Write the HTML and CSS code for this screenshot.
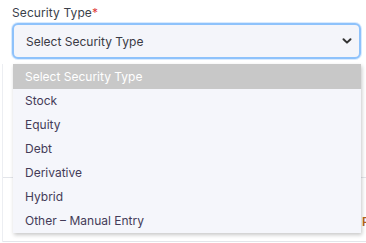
FILE: index.html
```html
<!DOCTYPE html>
<html lang="en">
<head>
    <meta charset="UTF-8">
    <meta name="viewport" content="width=device-width, initial-scale=1.0">
    <title>Security Type</title>
    <link rel="stylesheet" href="styles.css">
</head>
<body>
    <div class="form-group">
        <label class="form-label">Security Type<span class="required">*</span></label>
        <div class="select-wrap">
            <div class="select-box">
                <span>Select Security Type</span>
                <svg class="chevron" width="12" height="12" viewBox="0 0 12 12">
                    <path d="M2.5 4.2 L6 7.6 L9.5 4.2" fill="none" stroke="#333" stroke-width="2" stroke-linecap="round" stroke-linejoin="round"/>
                </svg>
            </div>
            <ul class="options">
                <li class="option selected">Select Security Type</li>
                <li class="option">Stock</li>
                <li class="option">Equity</li>
                <li class="option">Debt</li>
                <li class="option">Derivative</li>
                <li class="option">Hybrid</li>
                <li class="option">Other – Manual Entry</li>
            </ul>
        </div>
        <div class="behind">
            <div class="behind-row"></div>
            <div class="behind-row last"><span class="behind-btn">Pr</span></div>
        </div>
    </div>
</body>
</html>
```

FILE: styles.css
```css
:root {
    --text-color: #443b58;
    --field-bg: #f4f5fa;
    --focus-color: #8ec2fb;
}
body {
    font-family: 'Inter', sans-serif;
    background-color: #ffffff;
    margin: 0;
    padding: 0;
    overflow: hidden;
}
.form-group {
    padding: 5px 5px 0 12px;
}
.form-label {
    display: block;
    font-size: 12px;
    letter-spacing: 0.1px;
    color: #3a3f4a;
    margin-bottom: 3px;
}
.required {
    color: #e03b3b;
}
.select-wrap {
    position: relative;
}
.select-box {
    display: flex;
    align-items: center;
    justify-content: space-between;
    height: 32px;
    background-color: var(--field-bg);
    border: 2px solid var(--focus-color);
    border-radius: 6px;
    box-shadow: 0 0 0 1px rgba(142, 194, 251, 0.35);
    padding: 0 6px 0 12px;
    font-size: 12px;
    color: #3a3a44;
}
.chevron {
    display: block;
}
.options {
    position: absolute;
    top: 41px;
    left: 1px;
    right: 0;
    margin: 0;
    padding: 0;
    list-style: none;
    background-color: #f5f6fb;
    box-shadow: 1px 2px 4px rgba(0, 0, 0, 0.22);
    z-index: 2;
}
.option {
    height: 24px;
    line-height: 24px;
    padding-left: 12px;
    font-size: 12px;
    color: var(--text-color);
}
.option.selected {
    height: 25px;
    line-height: 25px;
    background-color: #c8c8c8;
    color: #ffffff;
}
.behind {
    margin-left: -10px;
    margin-right: -20px;
    margin-top: 5px;
    border-left: 1px solid #eceef2;
    height: 178px;
    position: relative;
}
.behind-row {
    height: 113px;
    border-bottom: 1px solid #e3e5ea;
}
.behind-row.last {
    height: 63px;
    padding-left: 359px;
}
.behind-btn {
    display: inline-block;
    margin-top: 36px;
    font-size: 12px;
    font-weight: 600;
    color: #b5651d;
}
```
